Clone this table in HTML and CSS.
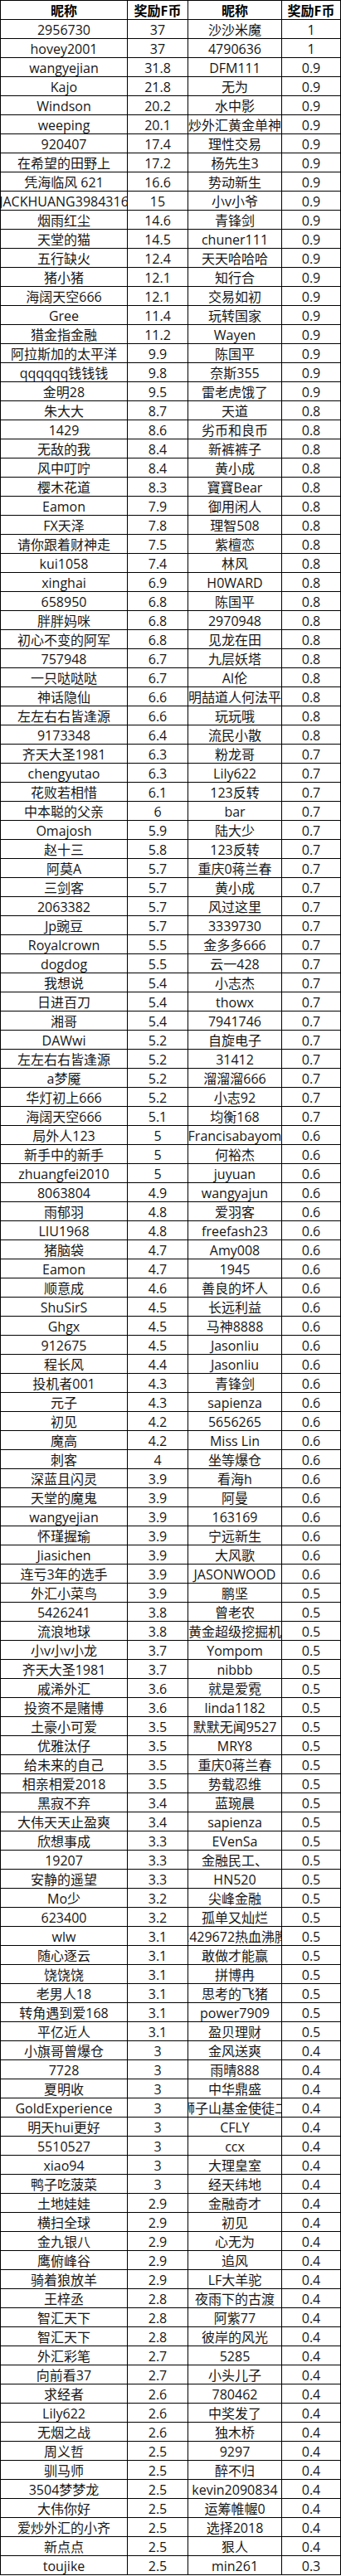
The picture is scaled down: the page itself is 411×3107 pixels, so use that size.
FILE: index.html
```html
<!DOCTYPE html>
<html lang="zh-CN">
<head>
<meta charset="utf-8">
<title>奖励F币</title>
<link rel="stylesheet" href="styles.css">
</head>
<body>
<div class="sheet">
<b>昵称</b><b>奖励F币</b><b>昵称</b><b>奖励F币</b>
<span>2956730</span><span>37</span><span>沙沙米魔</span><span>1</span>
<span>hovey2001</span><span>37</span><span>4790636</span><span>1</span>
<span>wangyejian</span><span>31.8</span><span>DFM111</span><span>0.9</span>
<span>Kajo</span><span>21.8</span><span>无为</span><span>0.9</span>
<span>Windson</span><span>20.2</span><span>水中影</span><span>0.9</span>
<span>weeping</span><span>20.1</span><span>炒外汇黄金单神</span><span>0.9</span>
<span>920407</span><span>17.4</span><span>理性交易</span><span>0.9</span>
<span>在希望的田野上</span><span>17.2</span><span>杨先生3</span><span>0.9</span>
<span>凭海临风 621</span><span>16.6</span><span>势动新生</span><span>0.9</span>
<span>JACKHUANG3984316</span><span>15</span><span>小v小爷</span><span>0.9</span>
<span>烟雨红尘</span><span>14.6</span><span>青锋剑</span><span>0.9</span>
<span>天堂的猫</span><span>14.5</span><span>chuner111</span><span>0.9</span>
<span>五行缺火</span><span>12.4</span><span>天天哈哈哈</span><span>0.9</span>
<span>猪小猪</span><span>12.1</span><span>知行合</span><span>0.9</span>
<span>海阔天空666</span><span>12.1</span><span>交易如初</span><span>0.9</span>
<span>Gree</span><span>11.4</span><span>玩转国家</span><span>0.9</span>
<span>猎金指金融</span><span>11.2</span><span>Wayen</span><span>0.9</span>
<span>阿拉斯加的太平洋</span><span>9.9</span><span>陈国平</span><span>0.9</span>
<span>qqqqqq钱钱钱</span><span>9.8</span><span>奈斯355</span><span>0.9</span>
<span>金明28</span><span>9.5</span><span>雷老虎饿了</span><span>0.9</span>
<span>朱大大</span><span>8.7</span><span>天道</span><span>0.8</span>
<span>1429</span><span>8.6</span><span>劣币和良币</span><span>0.8</span>
<span>无敌的我</span><span>8.4</span><span>新裤裤子</span><span>0.8</span>
<span>风中叮咛</span><span>8.4</span><span>黄小成</span><span>0.8</span>
<span>樱木花道</span><span>8.3</span><span>寶寶Bear</span><span>0.8</span>
<span>Eamon</span><span>7.9</span><span>御用闲人</span><span>0.8</span>
<span>FX天泽</span><span>7.8</span><span>理智508</span><span>0.8</span>
<span>请你跟着财神走</span><span>7.5</span><span>紫檀恋</span><span>0.8</span>
<span>kui1058</span><span>7.4</span><span>林风</span><span>0.8</span>
<span>xinghai</span><span>6.9</span><span>H0WARD</span><span>0.8</span>
<span>658950</span><span>6.8</span><span>陈国平</span><span>0.8</span>
<span>胖胖妈咪</span><span>6.8</span><span>2970948</span><span>0.8</span>
<span>初心不变的阿军</span><span>6.8</span><span>见龙在田</span><span>0.8</span>
<span>757948</span><span>6.7</span><span>九层妖塔</span><span>0.8</span>
<span>一只哒哒哒</span><span>6.7</span><span>AI伦</span><span>0.8</span>
<span>神话隐仙</span><span>6.6</span><span>明喆道人何法平</span><span>0.8</span>
<span>左左右右皆逢源</span><span>6.6</span><span>玩玩哦</span><span>0.8</span>
<span>9173348</span><span>6.4</span><span>流民小散</span><span>0.8</span>
<span>齐天大圣1981</span><span>6.3</span><span>粉龙哥</span><span>0.7</span>
<span>chengyutao</span><span>6.3</span><span>Lily622</span><span>0.7</span>
<span>花败若相惜</span><span>6.1</span><span>123反转</span><span>0.7</span>
<span>中本聪的父亲</span><span>6</span><span>bar</span><span>0.7</span>
<span>Omajosh</span><span>5.9</span><span>陆大少</span><span>0.7</span>
<span>赵十三</span><span>5.8</span><span>123反转</span><span>0.7</span>
<span>阿莫A</span><span>5.7</span><span>重庆0蒋兰春</span><span>0.7</span>
<span>三剑客</span><span>5.7</span><span>黄小成</span><span>0.7</span>
<span>2063382</span><span>5.7</span><span>风过这里</span><span>0.7</span>
<span>Jp豌豆</span><span>5.7</span><span>3339730</span><span>0.7</span>
<span>Royalcrown</span><span>5.5</span><span>金多多666</span><span>0.7</span>
<span>dogdog</span><span>5.5</span><span>云一428</span><span>0.7</span>
<span>我想说</span><span>5.4</span><span>小志杰</span><span>0.7</span>
<span>日进百刀</span><span>5.4</span><span>thowx</span><span>0.7</span>
<span>湘哥</span><span>5.4</span><span>7941746</span><span>0.7</span>
<span>DAWwi</span><span>5.2</span><span>自旋电子</span><span>0.7</span>
<span>左左右右皆逢源</span><span>5.2</span><span>31412</span><span>0.7</span>
<span>a梦魇</span><span>5.2</span><span>溜溜溜666</span><span>0.7</span>
<span>华灯初上666</span><span>5.2</span><span>小志92</span><span>0.7</span>
<span>海阔天空666</span><span>5.1</span><span>均衡168</span><span>0.7</span>
<span>局外人123</span><span>5</span><span>Francisabayom</span><span>0.6</span>
<span>新手中的新手</span><span>5</span><span>何裕杰</span><span>0.6</span>
<span>zhuangfei2010</span><span>5</span><span>juyuan</span><span>0.6</span>
<span>8063804</span><span>4.9</span><span>wangyajun</span><span>0.6</span>
<span>雨郁羽</span><span>4.8</span><span>爱羽客</span><span>0.6</span>
<span>LIU1968</span><span>4.8</span><span>freefash23</span><span>0.6</span>
<span>猪脑袋</span><span>4.7</span><span>Amy008</span><span>0.6</span>
<span>Eamon</span><span>4.7</span><span>1945</span><span>0.6</span>
<span>顺意成</span><span>4.6</span><span>善良的坏人</span><span>0.6</span>
<span>ShuSirS</span><span>4.5</span><span>长远利益</span><span>0.6</span>
<span>Ghgx</span><span>4.5</span><span>马神8888</span><span>0.6</span>
<span>912675</span><span>4.5</span><span>Jasonliu</span><span>0.6</span>
<span>程长风</span><span>4.4</span><span>Jasonliu</span><span>0.6</span>
<span>投机者001</span><span>4.3</span><span>青锋剑</span><span>0.6</span>
<span>元子</span><span>4.3</span><span>sapienza</span><span>0.6</span>
<span>初见</span><span>4.2</span><span>5656265</span><span>0.6</span>
<span>魔高</span><span>4.2</span><span>Miss Lin</span><span>0.6</span>
<span>刺客</span><span>4</span><span>坐等爆仓</span><span>0.6</span>
<span>深蓝且闪灵</span><span>3.9</span><span>看海h</span><span>0.6</span>
<span>天堂的魔鬼</span><span>3.9</span><span>阿曼</span><span>0.6</span>
<span>wangyejian</span><span>3.9</span><span>163169</span><span>0.6</span>
<span>怀瑾握瑜</span><span>3.9</span><span>宁远新生</span><span>0.6</span>
<span>Jiasichen</span><span>3.9</span><span>大风歌</span><span>0.6</span>
<span>连亏3年的选手</span><span>3.9</span><span>JASONWOOD</span><span>0.6</span>
<span>外汇小菜鸟</span><span>3.9</span><span>鹏坚</span><span>0.5</span>
<span>5426241</span><span>3.8</span><span>曾老农</span><span>0.5</span>
<span>流浪地球</span><span>3.8</span><span>黄金超级挖掘机</span><span>0.5</span>
<span>小v小v小龙</span><span>3.7</span><span>Yompom</span><span>0.5</span>
<span>齐天大圣1981</span><span>3.7</span><span>nibbb</span><span>0.5</span>
<span>戚浠外汇</span><span>3.6</span><span>就是爱霓</span><span>0.5</span>
<span>投资不是赌博</span><span>3.6</span><span>linda1182</span><span>0.5</span>
<span>土豪小可爱</span><span>3.5</span><span>默默无闻9527</span><span>0.5</span>
<span>优雅汰仔</span><span>3.5</span><span>MRY8</span><span>0.5</span>
<span>给未来的自己</span><span>3.5</span><span>重庆0蒋兰春</span><span>0.5</span>
<span>相亲相爱2018</span><span>3.5</span><span>势载忍维</span><span>0.5</span>
<span>黑寂不弃</span><span>3.4</span><span>蓝琬晨</span><span>0.5</span>
<span>大伟天天止盈爽</span><span>3.4</span><span>sapienza</span><span>0.5</span>
<span>欣想事成</span><span>3.3</span><span>EVenSa</span><span>0.5</span>
<span>19207</span><span>3.3</span><span>金融民工、</span><span>0.5</span>
<span>安静的遥望</span><span>3.3</span><span>HN520</span><span>0.5</span>
<span>Mo少</span><span>3.2</span><span>尖峰金融</span><span>0.5</span>
<span>623400</span><span>3.2</span><span>孤单又灿烂</span><span>0.5</span>
<span>wlw</span><span>3.1</span><span>2429672热血沸腾</span><span>0.5</span>
<span>随心逐云</span><span>3.1</span><span>敢做才能赢</span><span>0.5</span>
<span>饶饶饶</span><span>3.1</span><span>拼博冉</span><span>0.5</span>
<span>老男人18</span><span>3.1</span><span>思考的飞猪</span><span>0.5</span>
<span>转角遇到爱168</span><span>3.1</span><span>power7909</span><span>0.5</span>
<span>平亿近人</span><span>3.1</span><span>盈贝理财</span><span>0.5</span>
<span>小旗哥曾爆仓</span><span>3</span><span>金风送爽</span><span>0.4</span>
<span>7728</span><span>3</span><span>雨晴888</span><span>0.4</span>
<span>夏明收</span><span>3</span><span>中华鼎盛</span><span>0.4</span>
<span>GoldExperience</span><span>3</span><span>狮子山基金使徒二</span><span>0.4</span>
<span>明天hui更好</span><span>3</span><span>CFLY</span><span>0.4</span>
<span>5510527</span><span>3</span><span>ccx</span><span>0.4</span>
<span>xiao94</span><span>3</span><span>大理皇室</span><span>0.4</span>
<span>鸭子吃菠菜</span><span>3</span><span>经天纬地</span><span>0.4</span>
<span>土地娃娃</span><span>2.9</span><span>金融奇才</span><span>0.4</span>
<span>横扫全球</span><span>2.9</span><span>初见</span><span>0.4</span>
<span>金九银八</span><span>2.9</span><span>心无为</span><span>0.4</span>
<span>鹰俯峰谷</span><span>2.9</span><span>追风</span><span>0.4</span>
<span>骑着狼放羊</span><span>2.9</span><span>LF大羊驼</span><span>0.4</span>
<span>王梓丞</span><span>2.8</span><span>夜雨下的古渡</span><span>0.4</span>
<span>智汇天下</span><span>2.8</span><span>阿紫77</span><span>0.4</span>
<span>智汇天下</span><span>2.8</span><span>彼岸的风光</span><span>0.4</span>
<span>外汇彩笔</span><span>2.7</span><span>5285</span><span>0.4</span>
<span>向前看37</span><span>2.7</span><span>小头儿子</span><span>0.4</span>
<span>求经者</span><span>2.6</span><span>780462</span><span>0.4</span>
<span>Lily622</span><span>2.6</span><span>中奖发了</span><span>0.4</span>
<span>无烟之战</span><span>2.6</span><span>独木桥</span><span>0.4</span>
<span>周义哲</span><span>2.5</span><span>9297</span><span>0.4</span>
<span>驯马师</span><span>2.5</span><span>醉不归</span><span>0.4</span>
<span>3504梦梦龙</span><span>2.5</span><span>kevin2090834</span><span>0.4</span>
<span>大伟你好</span><span>2.5</span><span>运筹帷幄0</span><span>0.4</span>
<span>爱炒外汇的小齐</span><span>2.5</span><span>选择2018</span><span>0.4</span>
<span>新点点</span><span>2.5</span><span>狠人</span><span>0.4</span>
<span>toujike</span><span>2.5</span><span>min261</span><span>0.3</span>
</div>
</body>
</html>
```

FILE: styles.css
```css
html, body {
  margin: 0;
  padding: 0;
  background: #ffffff;
}

.sheet {
  display: grid;
  grid-template-columns: 152px 72px 112px 70px;
  grid-auto-rows: 22px;
  gap: 1px;
  padding: 1px;
  width: 409px;
  background: #000000;
  font-family: "Open Sans", "Noto Sans CJK SC", sans-serif;
  font-size: 16px;
  color: #161616;
}

.sheet > span,
.sheet > b {
  display: flex;
  align-items: center;
  justify-content: center;
  overflow: hidden;
  white-space: nowrap;
  background: #ffffff;
  line-height: 22px;
  padding-top: 1px;
  box-sizing: border-box;
}

.sheet > b {
  font-weight: 700;
  color: #000000;
}
```
